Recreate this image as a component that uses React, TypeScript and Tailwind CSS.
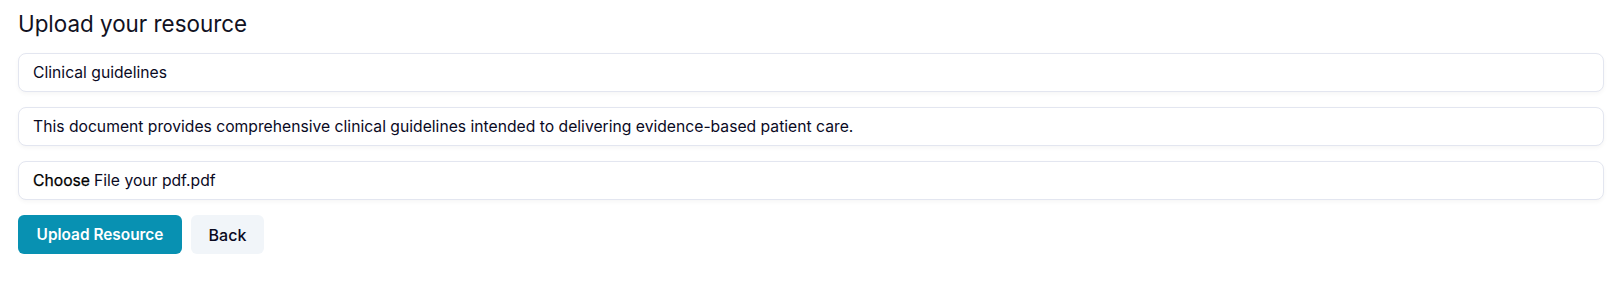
import React from "react";

export default function App() {
  const inputCls =
    "w-full h-[39px] rounded-lg border border-[#e3e6f0] bg-white px-[14px] text-[15.7px] text-[#0a0a1f] shadow-[0_2px_4px_rgba(0,0,0,0.04)] outline-none";
  return (
    <div
      className="min-h-[297px] w-full bg-white pl-[18px] pr-[5px] pt-[8px]"
      style={{ fontFamily: "Inter, 'Noto Sans', sans-serif" }}
    >
      <h1 className="text-[22.4px] font-normal leading-[31px] text-[#111122]">Upload your resource</h1>
      <div className="mt-[14px] flex flex-col gap-[15px]">
        <input className={inputCls} defaultValue="Clinical guidelines" readOnly />
        <input
          className={inputCls}
          defaultValue="This document provides comprehensive clinical guidelines intended to delivering evidence-based patient care."
          readOnly
        />
        <div className={inputCls + " flex items-center"}>
          <span className="text-black [-webkit-text-stroke:0.25px_black]">Choose</span>
          <span className="ml-[4px]">File your pdf.pdf</span>
        </div>
      </div>
      <div className="mt-[15px] flex gap-[9px]">
        <button className="h-[39px] w-[164px] rounded-md bg-[#0891b2] text-[15.4px] font-semibold text-white">
          Upload Resource
        </button>
        <button className="h-[39px] w-[73px] rounded-md bg-[#f1f5f9] text-[16px] font-medium text-[#0a0a1f]">
          Back
        </button>
      </div>
    </div>
  );
}
